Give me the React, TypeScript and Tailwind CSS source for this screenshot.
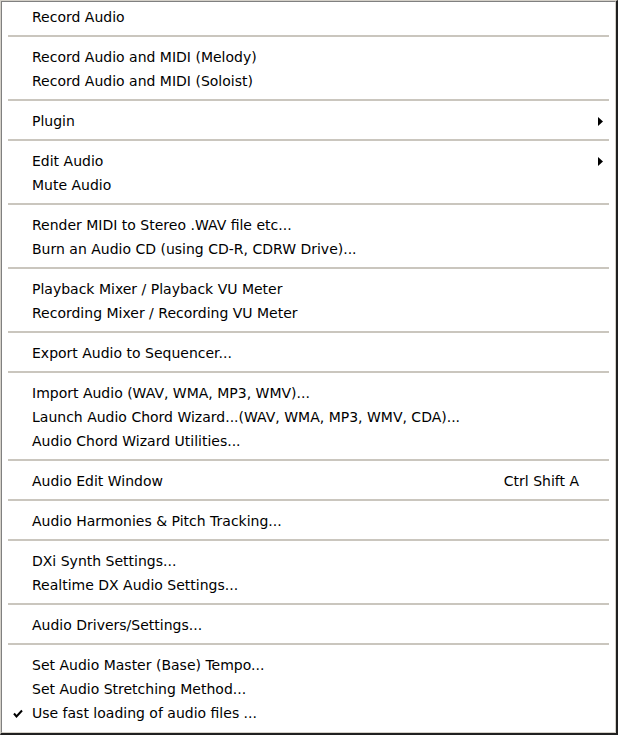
import React from 'react';

type Item = { label: string; shortcut?: string; submenu?: boolean; checked?: boolean };

const groups: Item[][] = [
  [{ label: 'Record Audio' }],
  [{ label: 'Record Audio and MIDI (Melody)' }, { label: 'Record Audio and MIDI (Soloist)' }],
  [{ label: 'Plugin', submenu: true }],
  [{ label: 'Edit Audio', submenu: true }, { label: 'Mute Audio' }],
  [{ label: 'Render MIDI to Stereo .WAV file etc...' }, { label: 'Burn an Audio CD (using CD-R, CDRW Drive)...' }],
  [{ label: 'Playback Mixer / Playback VU Meter' }, { label: 'Recording Mixer / Recording VU Meter' }],
  [{ label: 'Export Audio to Sequencer...' }],
  [
    { label: 'Import Audio (WAV, WMA, MP3, WMV)...' },
    { label: 'Launch Audio Chord Wizard...(WAV, WMA, MP3, WMV, CDA)...' },
    { label: 'Audio Chord Wizard Utilities...' },
  ],
  [{ label: 'Audio Edit Window', shortcut: 'Ctrl Shift A' }],
  [{ label: 'Audio Harmonies & Pitch Tracking...' }],
  [{ label: 'DXi Synth Settings...' }, { label: 'Realtime DX Audio Settings...' }],
  [{ label: 'Audio Drivers/Settings...' }],
  [
    { label: 'Set Audio Master (Base) Tempo...' },
    { label: 'Set Audio Stretching Method...' },
    { label: 'Use fast loading of audio files ...', checked: true },
  ],
];

const MenuRow: React.FC<{ item: Item }> = ({ item }) => (
  <div className="flex items-center h-[24px] pl-[30px] pr-[12px] text-[14px] text-black pt-[2px]">
    <span className="w-[30px] -ml-[30px] flex justify-center">
      {item.checked && (
        <svg width="10" height="9" viewBox="0 0 10 9" className="ml-[2px]">
          <path d="M1 4.5 L3.5 7.5 L9 1.5" fill="none" stroke="#000" strokeWidth="2" />
        </svg>
      )}
    </span>
    <span className="flex-1 whitespace-nowrap">{item.label}</span>
    {item.shortcut && <span className="mr-[24px] whitespace-nowrap">{item.shortcut}</span>}
    {item.submenu && (
      <svg width="5" height="9" viewBox="0 0 5 9">
        <path d="M0 0 L5 4.5 L0 9 Z" fill="#000" />
      </svg>
    )}
  </div>
);

export default function App() {
  return (
    <div
      className="w-[618px] h-[735px] bg-white border-l border-t border-[#d4d0c8] border-r-[2px] border-b-[2px] border-r-[#202020] border-b-[#202020] overflow-hidden"
      style={{ fontFamily: '"DejaVu Sans", Verdana, sans-serif' }}
    >
      <div className="h-full border-l border-t border-[#808080] border-r border-b border-r-[#d4d0c8] border-b-[#d4d0c8] py-[2px]">
        {groups.map((g, gi) => (
          <div key={gi}>
            {gi > 0 && (
              <div className="py-[7px] px-[6px]">
                <div className="h-[2px] bg-[#cac6be]" />
              </div>
            )}
            {g.map((it, ii) => (
              <MenuRow key={ii} item={it} />
            ))}
          </div>
        ))}
      </div>
    </div>
  );
}
